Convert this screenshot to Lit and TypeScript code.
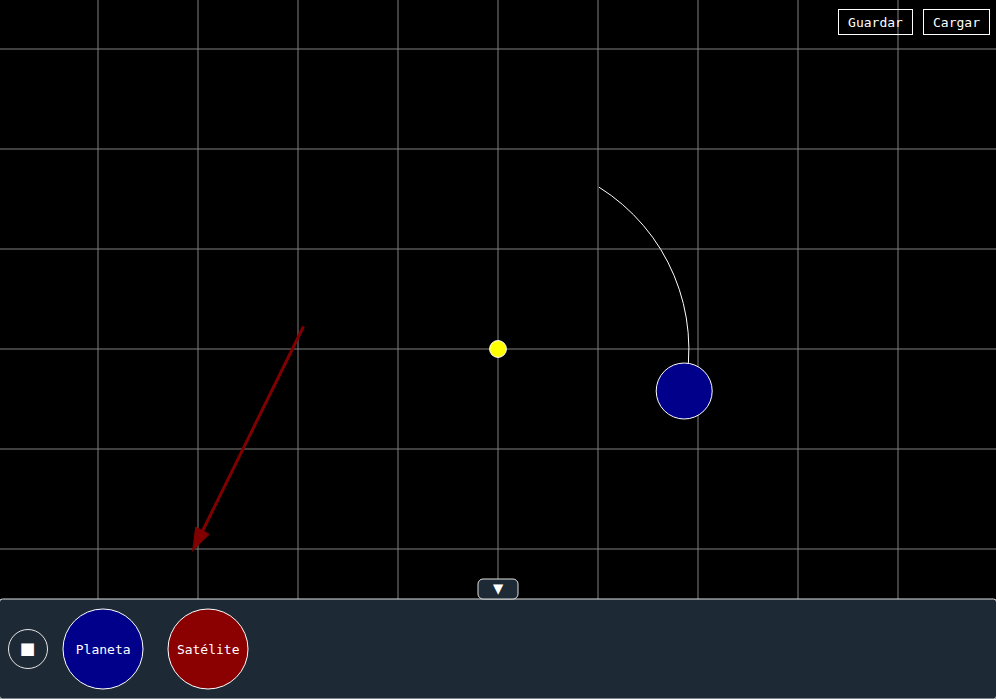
import { LitElement, html, svg, css } from "lit";
import { customElement } from "lit/decorators.js";

const VERTICALS = [98, 198, 298, 398, 498, 598, 698, 798, 898];
const HORIZONTALS = [49, 149, 249, 349, 449, 549];

@customElement("orbit-scene")
class OrbitScene extends LitElement {
  static styles = css`
    :host { display: block; }
    svg { display: block; }
    .grid { stroke: #808080; stroke-width: 1; }
    .orbit { fill: none; stroke: #fff; }
    .star { fill: #ff0; stroke: #fff; }
    .planet { fill: #00008b; stroke: #fff; }
    .shaft { stroke: #800000; stroke-width: 3; }
    .head { fill: #800000; }
  `;
  render() {
    return html`<svg width="996" height="699" viewBox="0 0 996 699">
      <g class="grid">
        ${VERTICALS.map((x) => svg`<line x1=${x} y1="0" x2=${x} y2="699"></line>`)}
        ${HORIZONTALS.map((y) => svg`<line x1="0" y1=${y} x2="996" y2=${y}></line>`)}
      </g>
      <path class="orbit" d="M599 187.2A191 191 0 0 1 684.2 391.2"></path>
      <circle class="star" cx="498" cy="349" r="8.4"></circle>
      <circle class="planet" cx="684.2" cy="391" r="28"></circle>
      <line class="shaft" x1="303.5" y1="326.5" x2="202.5" y2="531"></line>
      <path class="head" d="M192 552L195.3 526.5L209.8 534Z"></path>
    </svg>`;
  }
}

@customElement("body-token")
class BodyToken extends LitElement {
  static properties = { label: {}, kind: {} };
  declare label: string;
  declare kind: string;
  static styles = css`
    :host { display: grid; width: 82px; height: 82px; place-items: center; }
    svg, .label { grid-area: 1 / 1; }
    svg { display: block; }
    circle { stroke: #fff; }
    .planeta { fill: #00008b; }
    .satelite { fill: #8b0000; }
    .label { z-index: 1; padding-left: 0.4px; }
  `;
  render() {
    return html`<svg width="82" height="82"><circle class=${this.kind} cx="41" cy="41" r="40"></circle></svg>
      <span class="label">${this.label}</span>`;
  }
}

@customElement("app-root")
class AppRoot extends LitElement {
  static styles = css`
    :host {
      display: grid;
      width: 996px;
      height: 699px;
      overflow: hidden;
      background: #000;
      color: #fff;
      font: 13px/15px "DejaVu Sans Mono", monospace;
    }
    orbit-scene, .ui { grid-area: 1 / 1; }
    .ui { display: flex; flex-direction: column; z-index: 1; }
    button {
      box-sizing: border-box;
      margin: 0;
      padding: 0;
      color: inherit;
      font: inherit;
      background: none;
      border: 1px solid #fff;
    }
    .files { display: flex; justify-content: flex-end; gap: 10px; padding: 9px 6px 0 0; }
    .files button { height: 26px; width: 75px; }
    .files .load { width: 67px; }
    .tab {
      display: grid;
      place-items: center;
      margin: auto auto -2px;
      width: 42px;
      height: 22px;
      border: 0;
      z-index: 1;
      font: 17px/18px "DejaVu Sans Mono", monospace;
    }
    .tab > * { grid-area: 1 / 1; }
    .tab span { padding-bottom: 3px; }
    .frame { display: block; }
    .frame rect { fill: #1d2934; stroke: #e0e0e0; }
    .panel { display: grid; height: 101px; }
    .panel > * { grid-area: 1 / 1; }
    .tools { display: flex; align-items: center; padding: 1px 0 0 8px; z-index: 1; }
    .stop {
      width: 40px;
      height: 40px;
      border-color: #e6e6e6;
      border-radius: 50%;
      font: 21px/34px "DejaVu Sans Mono", monospace;
      padding: 0 1px 2px 0;
      margin-right: 14px;
    }
    .tools body-token { margin-right: 23px; }
  `;
  render() {
    return html`<orbit-scene></orbit-scene>
      <div class="ui">
        <div class="files">
          <button>Guardar</button>
          <button class="load">Cargar</button>
        </div>
        <button class="tab">
          <svg class="frame" width="42" height="22"><rect x="1" y="1" width="40" height="20" rx="5"></rect></svg>
          <span>▼</span>
        </button>
        <div class="panel">
          <svg class="frame" width="996" height="101"><rect x="-0.5" y="1" width="997" height="100" rx="3"></rect></svg>
          <div class="tools">
            <button class="stop">■</button>
            <body-token kind="planeta" label="Planeta"></body-token>
            <body-token kind="satelite" label="Satélite"></body-token>
          </div>
        </div>
      </div>`;
  }
}
